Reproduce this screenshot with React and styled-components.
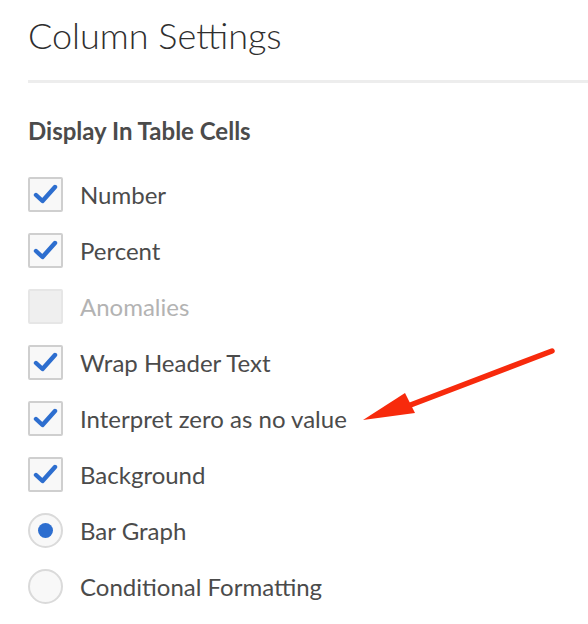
import React from 'react';
import styled, { createGlobalStyle } from 'styled-components';

const GlobalStyle = createGlobalStyle`
  html, body {
    margin: 0;
    padding: 0;
    background: #ffffff;
  }
  body {
    font-family: Lato, "Open Sans", sans-serif;
    color: #4b4b4b;
  }
`;

const Panel = styled.div`
  position: relative;
  width: 588px;
  height: 624px;
  overflow: hidden;
  padding-left: 28px;
  box-sizing: border-box;
`;

const Title = styled.h1`
  margin: 0;
  padding-top: 13px;
  height: 64px;
  font-size: 36px;
  font-weight: 300;
  color: #2f2f2f;
  line-height: 44px;
  box-sizing: border-box;
`;

const Divider = styled.div`
  height: 3px;
  margin-top: 16px;
  background: #ededed;
`;

const SectionTitle = styled.h2`
  margin: 34px 0 0;
  font-size: 24px;
  font-weight: 700;
  color: #4b4b4b;
  line-height: 28px;
`;

const List = styled.div`
  display: flex;
  flex-direction: column;
  gap: 20px;
  margin-top: 31px;
`;

const Row = styled.label`
  display: flex;
  align-items: center;
  gap: 17px;
  height: 36px;
  font-size: 24px;
  color: ${(p) => (p.$disabled ? '#b3b3b3' : '#4b4b4b')};
`;

const Box = styled.span`
  width: 35px;
  height: 35px;
  box-sizing: border-box;
  border: 2px solid ${(p) => (p.$disabled ? '#e6e6e6' : '#cfcfcf')};
  border-radius: 2px;
  background: ${(p) => (p.$disabled ? '#efefef' : '#f8f8f8')};
  display: flex;
  align-items: center;
  justify-content: center;
  flex-shrink: 0;
`;

const Radio = styled.span`
  width: 35px;
  height: 35px;
  box-sizing: border-box;
  border: 2px solid #dadada;
  border-radius: 50%;
  background: #f8f8f8;
  display: flex;
  align-items: center;
  justify-content: center;
  flex-shrink: 0;
`;

const Dot = styled.span`
  width: 15px;
  height: 15px;
  border-radius: 50%;
  background: #2d6ecf;
`;

const Arrow = styled.svg`
  position: absolute;
  left: 0;
  top: 0;
  pointer-events: none;
`;

const Check = () => (
  <svg width="26" height="22" viewBox="0 0 26 22">
    <path
      d="M3 12 L9.5 18 L22 4"
      fill="none"
      stroke="#2d6ecf"
      strokeWidth="4.4"
      strokeLinecap="round"
      strokeLinejoin="round"
    />
  </svg>
);

const items = [
  { label: 'Number', type: 'check', checked: true },
  { label: 'Percent', type: 'check', checked: true },
  { label: 'Anomalies', type: 'check', disabled: true },
  { label: 'Wrap Header Text', type: 'check', checked: true },
  { label: 'Interpret zero as no value', type: 'check', checked: true },
  { label: 'Background', type: 'check', checked: true },
  { label: 'Bar Graph', type: 'radio', checked: true },
  { label: 'Conditional Formatting', type: 'radio' },
];

const App = () => (
  <>
    <GlobalStyle />
    <Panel>
      <Title>Column Settings</Title>
      <Divider />
      <SectionTitle>Display In Table Cells</SectionTitle>
      <List>
        {items.map((item) => (
          <Row key={item.label} $disabled={item.disabled}>
            {item.type === 'check' ? (
              <Box $disabled={item.disabled}>{item.checked && <Check />}</Box>
            ) : (
              <Radio>{item.checked && <Dot />}</Radio>
            )}
            {item.label}
          </Row>
        ))}
      </List>
      <Arrow width="588" height="624" viewBox="0 0 588 624">
        <line x1="552" y1="351" x2="400" y2="409" stroke="#f72a0c" strokeWidth="5.5" strokeLinecap="round" />
        <polygon points="363,420 405,393 415,413" fill="#f72a0c" />
      </Arrow>
    </Panel>
  </>
);

export default App;
